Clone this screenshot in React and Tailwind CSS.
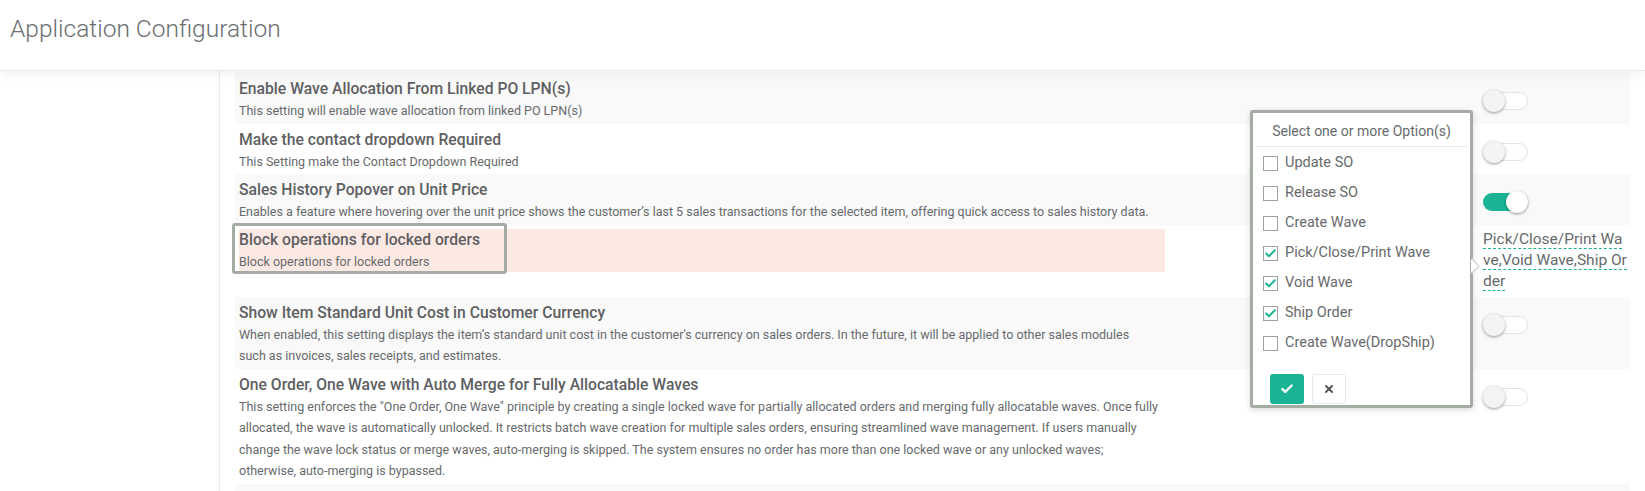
import React from 'react';
import { Check, X } from 'lucide-react';

const Toggle = ({ on }) => (
  <div className="relative mt-[14px] h-[20px] w-[46px]">
    <div
      className={
        on
          ? 'absolute left-0 top-[1px] h-[18px] w-[45px] rounded-full bg-[#1ab394]'
          : 'absolute left-0 top-[1px] h-[18px] w-[45px] rounded-full border border-[#e3e3e3] bg-white'
      }
    />
    <div
      className={
        on
          ? 'absolute left-[23px] top-[-1px] h-[22px] w-[22px] rounded-full bg-white shadow-[0_1px_3px_rgba(0,0,0,0.4)]'
          : 'absolute left-0 top-[-1px] h-[22px] w-[22px] rounded-full bg-[#f4f4f4] shadow-[0_1px_3px_rgba(0,0,0,0.4)]'
      }
    />
  </div>
);

// desc is a list of lines, broken where the original wraps
const Row = ({ title, desc, on, gray }) => (
  <div className={gray ? 'flex bg-[#f9f9f9] pt-[4px] pb-[2px]' : 'flex bg-white pt-[4px] pb-[2px]'}>
    <div className="w-[963px] shrink-0 pl-[4px] pr-[4px]">
      <div className="text-[15.7px] font-medium leading-[23px] text-[#5e6062]">{title}</div>
      {desc.map((line) => (
        <div key={line} className="text-[12.5px] leading-[21.5px]">
          {line}
        </div>
      ))}
    </div>
    <div className="ml-[285px] w-[147px] shrink-0">
      <Toggle on={on} />
    </div>
  </div>
);

const options = [
  ['Update SO', false],
  ['Release SO', false],
  ['Create Wave', false],
  ['Pick/Close/Print Wave', true],
  ['Void Wave', true],
  ['Ship Order', true],
  ['Create Wave(DropShip)', false],
];

const Popover = () => (
  <div className="absolute left-[1250px] top-[110px] h-[298px] w-[223px] rounded-[3px] border-[3px] border-[#a4aca4] bg-white shadow-[0_2px_6px_rgba(0,0,0,0.15)]">
    <div className="mx-[3px] border-b border-[#e7eaec] pb-[6px] pt-[9px] text-center text-[14px] leading-[18px]">
      Select one or more Option(s)
    </div>
    <div className="pl-[10px] pt-[1px]">
      {options.map(([label, checked]) => (
        <div key={label} className="flex h-[30px] items-center">
          <div className="flex h-[15px] w-[15px] items-center justify-center border border-[#a0a0a0] bg-white">
            {checked && <Check size={13} strokeWidth={3.5} className="text-[#1ab394]" />}
          </div>
          <span className="ml-[7px] text-[14.5px]">{label}</span>
        </div>
      ))}
    </div>
    <div className="flex gap-[8px] pl-[17px] pt-[16px]">
      <div className="flex h-[30px] w-[34px] items-center justify-center rounded-[3px] bg-[#1ab394]">
        <Check size={14} strokeWidth={4} className="text-white" />
      </div>
      <div className="flex h-[30px] w-[34px] items-center justify-center rounded-[3px] border border-[#e7eaec] bg-white">
        <X size={12} strokeWidth={4} className="text-[#555]" />
      </div>
    </div>
    <div className="absolute right-[-10px] top-[145px] h-0 w-0 border-y-[8px] border-l-[8px] border-y-transparent border-l-[#d4d4d4]" />
    <div className="absolute right-[-8px] top-[146px] h-0 w-0 border-y-[7px] border-l-[7px] border-y-transparent border-l-white" />
  </div>
);

export default function App() {
  return (
    <div className="relative h-[491px] w-[1645px] overflow-hidden bg-white font-['Roboto',sans-serif] text-[#676a6c]">
      <div className="relative z-10 h-[71px] border-b border-[#e7eaec] bg-white pl-[10px] pt-[14px] shadow-[0_3px_10px_rgba(0,0,0,0.06)]">
        <h1 className="text-[24.5px] font-light leading-[30px] text-[#6b6e70]">Application Configuration</h1>
      </div>
      <div className="flex">
        <div className="h-[420px] w-[220px] shrink-0 border-r border-[#e7eaec] bg-white" />
        <div className="w-[1410px] shrink-0 pl-[15px] pt-[2px]">
          <Row
            gray
            title="Enable Wave Allocation From Linked PO LPN(s)"
            desc={['This setting will enable wave allocation from linked PO LPN(s)']}
          />
          <Row
            title="Make the contact dropdown Required"
            desc={['This Setting make the Contact Dropdown Required']}
          />
          <Row
            gray
            on
            title="Sales History Popover on Unit Price"
            desc={[
              'Enables a feature where hovering over the unit price shows the customer’s last 5 sales transactions for the selected item, offering quick access to sales history data.',
            ]}
          />
          <div className="flex bg-white pb-[5px] pt-[4px]">
            <div className="w-[963px] shrink-0 pl-[4px] pr-[4px]">
              <div className="relative w-[926px] bg-[#fde9e4]">
                <div className="absolute left-[-7px] top-[-6px] h-[51px] w-[275px] rounded-[3px] border-[3px] border-[#a4aca4]" />
                <div className="text-[15.7px] font-medium leading-[22px] text-[#5e6062]">Block operations for locked orders</div>
                <div className="text-[12.5px] leading-[21px]">Block operations for locked orders</div>
              </div>
            </div>
            <div className="ml-[285px] w-[145px] shrink-0 break-all text-[15.5px] leading-[21px]">
              <span className="border-b border-dashed border-[#1ab394]">Pick/Close/Print Wave,Void Wave,Ship Order</span>
            </div>
          </div>
          <Row
            gray
            title="Show Item Standard Unit Cost in Customer Currency"
            desc={[
              "When enabled, this setting displays the item’s standard unit cost in the customer's currency on sales orders. In the future, it will be applied to other sales modules",
              'such as invoices, sales receipts, and estimates.',
            ]}
          />
          <Row
            title="One Order, One Wave with Auto Merge for Fully Allocatable Waves"
            desc={[
              'This setting enforces the "One Order, One Wave" principle by creating a single locked wave for partially allocated orders and merging fully allocatable waves. Once fully',
              'allocated, the wave is automatically unlocked. It restricts batch wave creation for multiple sales orders, ensuring streamlined wave management. If users manually',
              'change the wave lock status or merge waves, auto-merging is skipped. The system ensures no order has more than one locked wave or any unlocked waves;',
              'otherwise, auto-merging is bypassed.',
            ]}
          />
          <div className="h-[40px] bg-[#f9f9f9]" />
        </div>
      </div>
      <Popover />
    </div>
  );
}
